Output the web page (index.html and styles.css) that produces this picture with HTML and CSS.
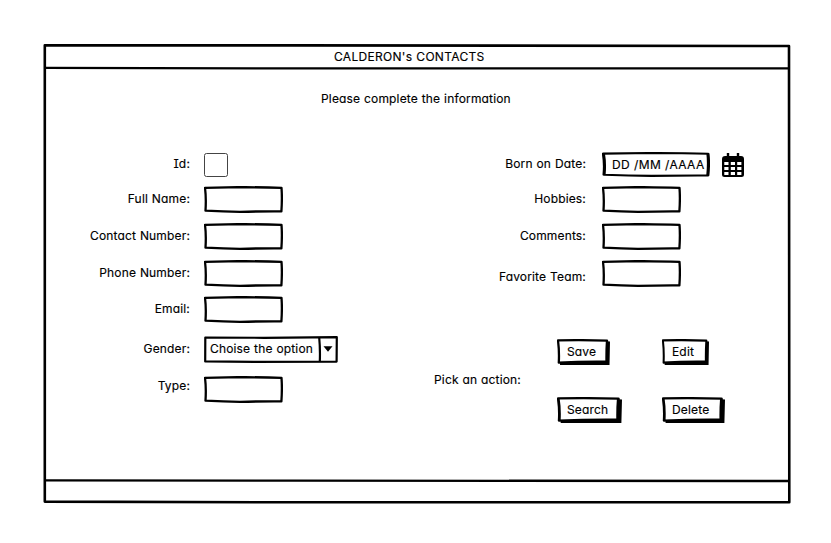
FILE: index.html
```html
<!DOCTYPE html>
<html lang="en">
<head>
<meta charset="utf-8">
<title>CALDERON's CONTACTS</title>
<link rel="stylesheet" href="styles.css">
</head>
<body>
<svg width="0" height="0" class="defs" aria-hidden="true">
  <symbol id="box" viewBox="0 0 79 27" preserveAspectRatio="none">
    <path d="M1 1.8 Q14 1.6 36 1.1 Q60 1.3 77.5 1.9 Q78.3 12 77.4 25.4 Q55 25.3 36 25.8 Q20 25.4 1.5 24.6 Q2.3 12 1 1.8Z" fill="none" stroke="#000" stroke-width="2.3" stroke-linejoin="round"/>
  </symbol>
  <symbol id="button" viewBox="0 0 53 26" preserveAspectRatio="none">
    <path d="M3 23 L3 26 L52.5 26 L53 2.5 L50 2.3 L49 22Z" fill="#000"/>
    <path d="M1 1.4 Q25 .8 50 1.6 Q49.3 12 49.5 22.7 Q25 22.4 1.8 23.6 Q2.4 12 1 1.4Z" fill="#fff" stroke="#000" stroke-width="2.3" stroke-linejoin="round"/>
  </symbol>
</svg>
<div class="window">
  <svg class="frame" viewBox="0 0 748 461" aria-hidden="true">
    <path d="M1.8 2.3 L250 2.4 L746 3 L746.3 459.3 L240 459.3 L1.8 458.6Z" class="line"/>
    <path d="M2 24.8 L240 25.4 L746 25.4" class="line thin"/>
    <path d="M2 437.4 L250 437.6 L746 438" class="line thin"/>
  </svg>
  <header class="title"><span>CALDERON's CONTACTS</span></header>
  <main>
    <p class="intro"><span>Please complete the information</span></p>
    <div class="columns">
      <form class="left">
        <div class="row r-id"><label class="up2 serif-i">Id:</label><span class="check"></span></div>
        <div class="row"><label>Full Name:</label><span class="field"><svg><use href="#box"/></svg></span></div>
        <div class="row"><label>Contact Number:</label><span class="field"><svg><use href="#box"/></svg></span></div>
        <div class="row r-phone"><label>Phone Number:</label><span class="field"><svg><use href="#box"/></svg></span></div>
        <div class="row r-email"><label>Email:</label><span class="field"><svg><use href="#box"/></svg></span></div>
        <div class="row r-gender"><label>Gender:</label><span class="field select"><svg viewBox="0 0 134 27"><path class="line sel" d="M1.3 1.5 L60 1.8 L132.8 1.2 L132.6 25.6 L50 25.8 L1.2 25.4Z M115.2 1.5 Q116.3 13 115.8 25.5"/><path d="M119.5 10.3 H128.5 L124 15.8Z"/></svg><span>Choise the option</span></span></div>
        <div class="row"><label class="up3">Type:</label><span class="field"><svg><use href="#box"/></svg></span></div>
      </form>
      <div class="right">
        <div class="row r-id"><label class="up2">Born on Date:</label><span class="field date"><svg><use href="#box"/></svg><span>DD /MM /AAAA</span></span>
          <svg class="calendar" viewBox="0 0 22 25"><path fill-rule="evenodd" d="M4.8 0h2.4v3h7.6V0h2.4v3h1.8Q22 3.2 22 6v15.5Q22 24 19.5 24h-17Q0 24 0 21.5V6Q0 3.2 3.2 3H4.8Z M2.3 9v3h4.2v-3Z M8.8 9v3h4.2v-3Z M15.2 9v3h4.2v-3Z M2.3 14v3h4.2v-3Z M8.8 14v3h4.2v-3Z M15.2 14v3h4.2v-3Z M2.3 19v3h4.2v-3Z M8.8 19v3h4.2v-3Z M15.2 19v3h4.2v-3Z"/></svg></div>
        <div class="row"><label>Hobbies:</label><span class="field"><svg><use href="#box"/></svg></span></div>
        <div class="row"><label>Comments:</label><span class="field"><svg><use href="#box"/></svg></span></div>
        <div class="row r-team"><label class="down4">Favorite Team:</label><span class="field"><svg><use href="#box"/></svg></span></div>
        <div class="actions">
          <span class="pick">Pick an action:</span>
          <div class="buttons">
            <button class="save"><svg><use href="#button"/></svg><span>Save</span></button>
            <button class="edit"><svg><use href="#button"/></svg><span>Edit</span></button>
            <button class="search"><svg><use href="#button"/></svg><span>Search</span></button>
            <button class="delete"><svg><use href="#button"/></svg><span>Delete</span></button>
          </div>
        </div>
      </div>
    </div>
  </main>
  <footer></footer>
</div>
</body>
</html>
```
FILE: styles.css
```css
* { box-sizing: border-box; }
body { margin: 0; padding: 43px 0 0 43px; background: #fff; color: #000; font: 12px/26px Inter, "Open Sans", sans-serif; font-feature-settings: "cv11"; letter-spacing: .16px; word-spacing: .3px; -webkit-text-stroke: .15px #000; overflow: hidden; }
.defs { position: absolute; }
.window { position: relative; width: 748px; height: 461px; display: flex; flex-direction: column; }
.frame { position: absolute; inset: 0; width: 748px; height: 461px; z-index: -1; }
.line { fill: none; stroke: #000; stroke-width: 2.6; stroke-linejoin: round; }
.thin { stroke-width: 2.3; }
.sel { stroke-width: 2.2; }
.title { height: 26px; padding-left: 291px; letter-spacing: .3px; line-height: 28px; white-space: nowrap; }
main { flex: 1; }
footer { height: 22px; }
.intro { margin: 0; height: 84px; padding: 17px 0 0 278px; white-space: nowrap; }
.columns { display: flex; }
.left { width: 391px; }
.right { width: 310px; }
.row { display: flex; height: 37px; white-space: nowrap; }
label { width: 147px; margin-right: 14px; text-align: right; flex: none; }
.right label { width: 152px; margin-right: 16px; }
.r-id { height: 33px; }
.r-phone { height: 36px; }
.r-email, .r-gender { height: 40px; }
.r-team { height: 79px; }
.up2 { margin-top: -2px; }
.up3 { margin-top: -3px; }
.down4 { margin-top: 4px; }
.serif-i { font-feature-settings: "cv11", "cv08"; }
.check { width: 24px; height: 24px; border: 1px solid #444; border-radius: 2.5px; }
.field { position: relative; width: 79px; height: 27px; flex: none; }
.field > svg, button > svg { position: absolute; inset: 0; width: 100%; height: 100%; z-index: -1; }
.select { width: 134px; padding-left: 6px; }
.date { width: 108px; height: 25px; margin-top: -1px; padding-left: 10px; letter-spacing: .35px; }
.calendar { width: 22px; height: 25px; margin: 0 0 0 12px; }
.actions { display: flex; }
.pick { width: 123px; padding-top: 28px; }
.buttons { display: grid; grid-template-columns: 105px 64px; grid-template-rows: 58px 26px; }
button { position: relative; height: 26px; padding: 0 0 0 10px; border: 0; background: none; color: inherit; font: inherit; font-feature-settings: inherit; letter-spacing: inherit; line-height: 24px; text-align: left; z-index: 0; }
.save { width: 53px; }
.edit { width: 47px; }
.search { width: 65px; }
.delete { width: 63px; }
```
